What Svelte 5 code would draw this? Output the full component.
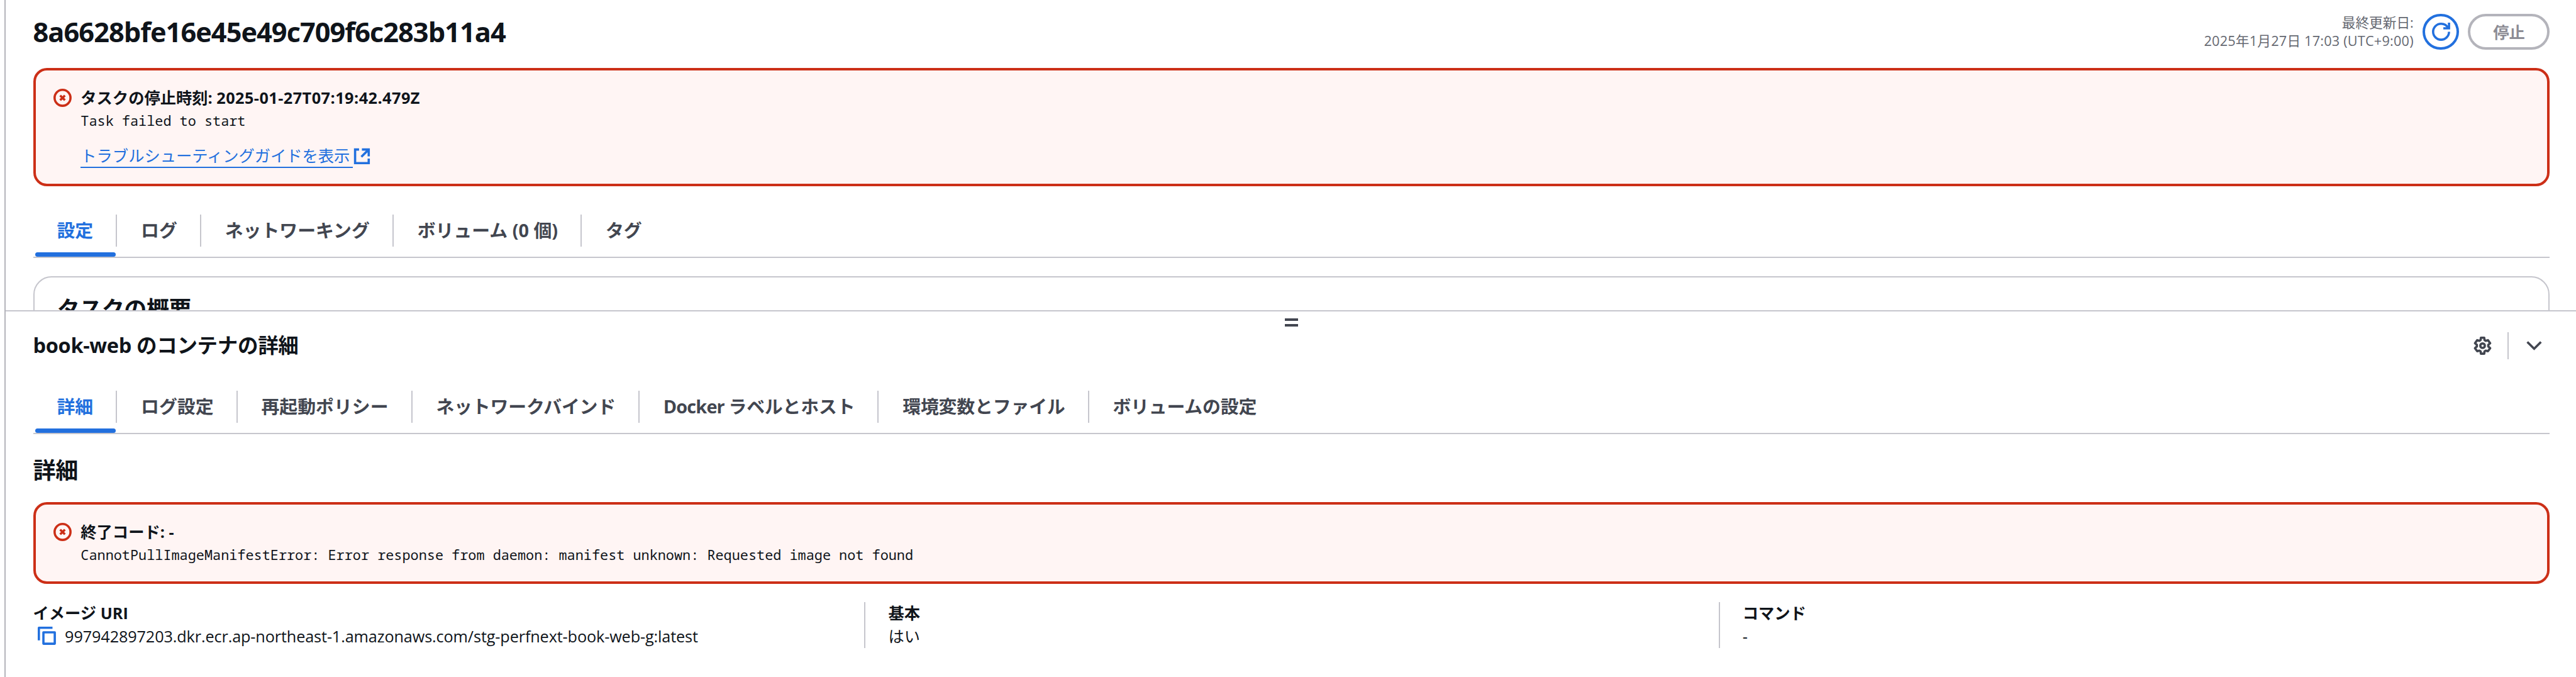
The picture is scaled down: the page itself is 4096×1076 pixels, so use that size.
<script>
  const taskTabs = [
    { text: '設定' },
    { text: 'ログ' },
    { text: 'ネットワーキング' },
    { text: 'ボリューム (0 個)' },
    { text: 'タグ' }
  ];
  const containerTabs = [
    { text: '詳細' },
    { text: 'ログ設定' },
    { text: '再起動ポリシー' },
    { text: 'ネットワークバインド' },
    { latin: 'Docker ', text: 'ラベルとホスト' },
    { text: '環境変数とファイル' },
    { text: 'ボリュームの設定' }
  ];
</script>

{#snippet errorIcon()}
  <svg class="icon" viewBox="0 0 16 16"><circle cx="8" cy="8" r="7" /><path d="m10.100 5.900-4.200 4.200M5.900 5.900l4.200 4.200" /></svg>
{/snippet}

{#snippet tabs(items)}
  <nav class="tabs">
    {#each items as item, i}
      <span class="tab" class:active={i === 0}>{#if item.latin}<span class="latin">{item.latin}</span>{/if}{item.text}</span>
    {/each}
  </nav>
{/snippet}

<div class="app">
  <main class="task">
    <header class="page-header">
      <h1>8a6628bfe16e45e49c709f6c283b11a4</h1>
      <div class="actions">
        <div class="status"><span>最終更新日:</span><span class="date">2025年1月27日 17:03 (UTC+9:00)</span></div>
        <button class="button round" aria-label="更新">
          <svg class="icon" viewBox="0 0 16 16"><path d="M15 8c0 3.870-3.130 7-7 7s-7-3.130-7-7 3.130-7 7-7c2.790 0 5.200 1.630 6.330 4" /><path d="M15 0v5h-5" /></svg>
        </button>
        <button class="button stop">停止</button>
      </div>
    </header>

    <section class="alert tall">
      {@render errorIcon()}
      <div>
        <h4>タスクの停止時刻: <span class="timestamp">2025-01-27T07:19:42.479Z</span></h4>
        <p>Task failed to start</p>
        <span class="link">
          <span class="link-text">トラブルシューティングガイドを表示</span>
          <svg class="icon" viewBox="0 0 16 16"><path d="M5.500 2H2v12h12v-4M8 2h6v6M7.500 8.500 14 2" /></svg>
        </span>
      </div>
    </section>

    {@render tabs(taskTabs)}
    <section class="overview"><h3>タスクの概要</h3></section>
  </main>

  <section class="panel">
    <div class="handle"></div>
    <header class="panel-header">
      <h2>book-web のコンテナの詳細</h2>
      <div class="tools">
        <svg class="icon gear" viewBox="0 0 16 16"><path d="M6.300 3 6.500 1h3l.2 2 1.100.7 1.900-.6 2 2.700-1.700 1.500v1.400l1.700 1.500-2 2.700-1.900-.6-1.100.7-.2 2h-3l-.2-2-1.100-.7-1.900.6-2-2.700L3 8.700V7.300L1.300 5.800l2-2.700 1.900.6z" /><circle cx="8" cy="8" r="2" /></svg>
        <span class="rule"></span>
        <svg class="icon" viewBox="0 0 16 16"><path d="m2 4.700 6 6 6-6" /></svg>
      </div>
    </header>

    {@render tabs(containerTabs)}
    <h3>詳細</h3>

    <section class="alert">
      {@render errorIcon()}
      <div>
        <h4>終了コード: -</h4>
        <p>CannotPullImageManifestError: Error response from daemon: manifest unknown: Requested image not found</p>
      </div>
    </section>

    <dl class="details">
      <div>
        <dt>イメージ URI</dt>
        <dd class="uri">
          <svg class="icon copy" viewBox="0 0 16 16"><path d="M1 12V1h12M5 5h10v10H5z" /></svg>
          <span>997942897203.dkr.ecr.ap-northeast-1.amazonaws.com/stg-perfnext-book-web-g:latest</span>
        </dd>
      </div>
      <div><dt>基本</dt><dd>はい</dd></div>
      <div><dt>コマンド</dt><dd>-</dd></div>
    </dl>
  </section>
</div>

<style>
  :global(body) { background: #fff; overflow: hidden; }
  .app {
    --u: calc(100vw / 4536);
    --line: #c6c6cd;
    --blue: #2270de;
    box-sizing: border-box;
    display: flex;
    flex-direction: column;
    height: 100vh;
    margin-left: calc(8 * var(--u));
    border-left: 2px solid #b4b4bb;
    color: #0f141a;
    font-family: 'Open Sans', 'Noto Sans CJK JP', sans-serif;
    font-size: calc(28 * var(--u));
    line-height: calc(40 * var(--u));
    white-space: nowrap;
  }
  .app :global(*) { box-sizing: border-box; }
  h1, h2, h3, h4, p, dl, dt, dd { margin: 0; }
  .icon {
    flex: none;
    width: calc(32 * var(--u));
    height: calc(32 * var(--u));
    fill: none;
    stroke: currentColor;
    stroke-width: 2;
    overflow: visible;
  }
  .gear { stroke-linejoin: round; }
  .copy { color: var(--blue); stroke-linejoin: round; }
  .task {
    flex: none;
    height: calc(546 * var(--u));
    padding: calc(24 * var(--u)) calc(46 * var(--u)) 0 calc(48 * var(--u));
    overflow: hidden;
  }
  .page-header, .panel-header { display: flex; align-items: center; justify-content: space-between; }
  .page-header { height: calc(64 * var(--u)); margin-bottom: calc(32 * var(--u)); }
  h1 { font-size: calc(48 * var(--u)); letter-spacing: -0.0225em; }
  h2 { font-size: calc(36 * var(--u)); letter-spacing: -0.01em; }
  h3 { font-size: calc(40 * var(--u)); line-height: calc(48 * var(--u)); letter-spacing: -0.015em; }
  h4 { font-size: calc(28 * var(--u)); }
  .timestamp { letter-spacing: 0.018em; }
  .actions { display: flex; align-items: center; gap: calc(16 * var(--u)); }
  .status {
    display: flex;
    flex-direction: column;
    align-items: flex-end;
    color: #656871;
    font-size: calc(24 * var(--u));
    line-height: calc(32 * var(--u));
  }
  .date { letter-spacing: 0.01em; }
  .button {
    display: grid;
    place-items: center;
    height: calc(64 * var(--u));
    padding: 0;
    border: 4px solid;
    border-radius: calc(40 * var(--u));
    background: #fff;
    font: inherit;
    font-weight: 700;
  }
  .round { width: calc(64 * var(--u)); color: var(--blue); }
  .stop { width: calc(144 * var(--u)); color: #8c8c94; border-color: #b4b4bb; }
  .alert {
    display: flex;
    gap: calc(16 * var(--u));
    height: calc(144 * var(--u));
    padding: calc(27 * var(--u)) calc(31.500 * var(--u));
    border: 4px solid #cc2f17;
    border-radius: calc(24 * var(--u));
    background: #fff5f4;
  }
  .alert.tall { height: calc(208 * var(--u)); }
  .alert > .icon { margin-top: calc(5 * var(--u)); color: #cc2f17; }
  .alert p {
    margin-top: calc(1.500 * var(--u));
    font-family: 'Noto Sans Mono', 'DejaVu Sans Mono', monospace;
    font-size: calc(24.200 * var(--u));
  }
  .link { display: flex; align-items: center; margin-top: calc(21 * var(--u)); color: var(--blue); }
  .link-text { padding-right: calc(5 * var(--u)); border-bottom: 2px solid; }
  .tabs {
    display: flex;
    height: calc(86 * var(--u));
    margin-top: calc(40 * var(--u));
    padding-left: calc(2 * var(--u));
    border-bottom: 2px solid var(--line);
  }
  .panel .tabs { margin-top: calc(46 * var(--u)); }
  .tab {
    position: relative;
    height: calc(56 * var(--u));
    margin-top: calc(10 * var(--u));
    padding: 0 calc(40 * var(--u)) 0 calc(41.800 * var(--u));
    border-right: 2px solid var(--line);
    color: #424650;
    font-size: calc(32 * var(--u));
    font-weight: 700;
    line-height: calc(56 * var(--u));
    white-space: pre;
  }
  .panel .tab:nth-child(n + 4) { letter-spacing: -0.006em; }
  .tab .latin { letter-spacing: -0.030em; }
  .tab:last-child { border-right: 0; }
  .tab.active { padding-left: calc(40 * var(--u)); color: var(--blue); }
  .tab.active::after {
    content: '';
    position: absolute;
    left: calc(2 * var(--u));
    right: 0;
    top: calc(66 * var(--u));
    height: calc(8 * var(--u));
    border-radius: calc(4 * var(--u));
    background: var(--blue);
  }
  .overview {
    height: calc(200 * var(--u));
    margin-top: calc(32 * var(--u));
    padding: calc(32 * var(--u)) calc(40 * var(--u));
    border: 2px solid var(--line);
    border-radius: calc(32 * var(--u));
  }
  .panel { flex: 1; padding: 0 calc(46 * var(--u)) 0 calc(48 * var(--u)); border-top: 2px solid var(--line); }
  .handle {
    width: calc(24 * var(--u));
    height: calc(14 * var(--u));
    margin: calc(12 * var(--u)) auto 0;
    border: solid #424650;
    border-width: 4px 0;
  }
  .panel-header { height: calc(48 * var(--u)); margin-top: calc(10 * var(--u)); }
  .tools { display: flex; align-items: center; gap: calc(28 * var(--u)); padding-right: calc(12 * var(--u)); color: #424650; }
  .rule { width: 2px; height: calc(48 * var(--u)); background: var(--line); }
  .panel > h3 { margin: calc(40 * var(--u)) 0 calc(32 * var(--u)); }
  .details { display: grid; grid-template-columns: 1464fr 1504fr 1464fr; margin-top: calc(32 * var(--u)); }
  .details > div { height: calc(80 * var(--u)); }
  .details > div + div { padding-left: calc(40 * var(--u)); border-left: 2px solid var(--line); }
  dt { margin-top: calc(-1 * var(--u)); font-weight: 700; }
  .uri { display: flex; align-items: center; gap: calc(16 * var(--u)); padding-left: calc(8 * var(--u)); letter-spacing: -0.0055em; }
</style>
